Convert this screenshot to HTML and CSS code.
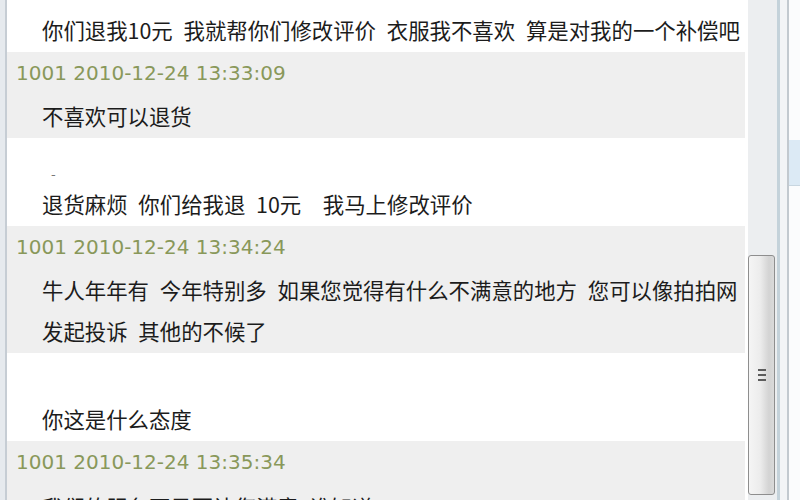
FILE: index.html
```html
<!DOCTYPE html>
<html lang="zh-CN">
  <head>
    <meta charset="UTF-8" />
    <meta name="viewport" content="width=device-width, initial-scale=1.0" />
    <title>聊天记录</title>
    <link rel="stylesheet" href="styles.css">
  </head>
  <body>
    <div class="window">
      <div class="edge"></div>

      <div class="chat">
        <div class="log">
          <div class="msg">
            <div class="who"></div>
            <p>你们退我10元 我就帮你们修改评价 衣服我不喜欢 算是对我的一个补偿吧</p>
          </div>
          <div class="msg seller">
            <div class="who">1001 2010-12-24 13:33:09</div>
            <p>不喜欢可以退货</p>
          </div>
          <div class="msg">
            <div class="who blank"><span class="dash">-</span></div>
            <p>退货麻烦 你们给我退 10元&nbsp; 我马上修改评价</p>
          </div>
          <div class="msg seller">
            <div class="who">1001 2010-12-24 13:34:24</div>
            <p>牛人年年有 今年特别多 如果您觉得有什么不满意的地方 您可以像拍拍网<br>发起投诉 其他的不候了</p>
          </div>
          <div class="msg">
            <div class="who"></div>
            <p>你这是什么态度</p>
          </div>
          <div class="msg seller">
            <div class="who">1001 2010-12-24 13:35:34</div>
            <p class="late">我们的服务不是要让您满意 谁知道</p>
          </div>
        </div>
      </div>

      <div class="scroll">
        <div class="thumb"><span class="grip"></span></div>
      </div>

      <div class="side">
        <div class="side-strip"></div>
        <div class="side-main">
          <div class="side-tab"></div>
        </div>
      </div>
    </div>
  </body>
</html>
```

FILE: styles.css
```css
html,
body {
  margin: 0;
  height: 500px;
  overflow: hidden;
  background: #fff;
}

.window {
  display: flex;
  height: 500px;
  overflow: hidden;
}

/* window frame on the left */
.edge {
  flex: 0 0 5px;
  background: #e6eaee;
  border-right: 2px solid #c6cdd4;
}

.chat {
  flex: 1;
  overflow: hidden;
  padding-right: 3px;
  background: #fff;
}
.log {
  margin-top: -36px;
}

.msg {
  padding: 10px 0 2px;
  background: #fff;
}
.msg.seller {
  padding: 8px 0 2px;
  background: #efefef;
}

.who {
  height: 26px;
  line-height: 26px;
  padding-left: 9px;
  font-family: "DejaVu Sans", sans-serif;
  font-size: 20px;
  color: #89985a;
  white-space: nowrap;
}
.who.blank {
  padding-left: 44px;
}
.dash {
  font-size: 13px;
  color: #777;
  vertical-align: -11px;
}

.msg p {
  margin: 9px 0 0;
  padding-left: 35px;
  font-family: "Noto Sans CJK SC", sans-serif;
  font-size: 21.4px;
  line-height: 41px;
  word-spacing: 6px;
  color: #1c1c1c;
  white-space: nowrap;
}
.msg p.late {
  margin-top: 11px;
}

/* scrollbar */
.scroll {
  flex: 0 0 29px;
  box-sizing: border-box;
  padding-top: 255px;
  background: #eceef0;
}
.thumb {
  width: 27px;
  height: 240px;
  box-sizing: border-box;
  border: 1px solid #8e8e8e;
  border-radius: 3px;
  background: linear-gradient(to right, #f5f5f5 0%, #ececec 45%, #d3d3d3 80%, #dadada 100%);
  display: flex;
  align-items: center;
  justify-content: center;
}
.grip {
  width: 8px;
  height: 12px;
  background: repeating-linear-gradient(to bottom, #5c5c5c 0 2px, transparent 2px 5px);
}

/* neighbouring window on the right */
.side {
  flex: 0 0 20px;
  display: flex;
  border-left: 3px solid #c4d2da;
}
.side-strip {
  flex: 0 0 7px;
  background: #f2f4f6;
  border-right: 2px solid #c2c9cf;
}
.side-main {
  flex: 1;
  background: #fbfcfd;
}
.side-tab {
  margin-top: 140px;
  height: 45px;
  background: #dceaf5;
  border-bottom: 1px solid #c8d6e0;
}
```
